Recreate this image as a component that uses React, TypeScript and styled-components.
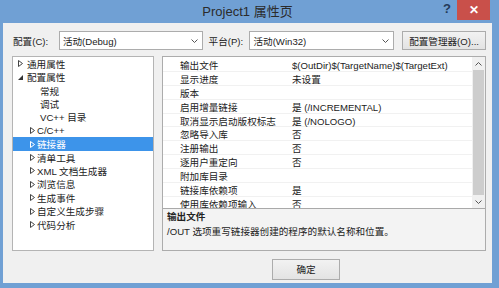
import styled, { createGlobalStyle } from "styled-components";

const GlobalStyle = createGlobalStyle`
  html, body {
    margin: 0;
    padding: 0;
    background: #70a0d4;
  }
  body {
    font-family: "Liberation Sans", "Noto Sans CJK SC", sans-serif;
    font-size: 9.6px;
    color: #222;
  }
`;

const Window = styled.div`
  width: 499px;
  height: 288px;
  box-sizing: border-box;
  padding: 0 7px 5px 3px;
  background: #70a0d4;
  display: flex;
  flex-direction: column;
`;

const TitleBar = styled.div`
  height: 23px;
  display: grid;
  grid-template-columns: 1fr auto 1fr;
  align-items: start;
`;

const Title = styled.div`
  grid-column: 2;
  line-height: 23px;
  font-size: 13px;
  color: #2b2b2b;
`;

const Caption = styled.div`
  grid-column: 3;
  display: flex;
  justify-content: flex-end;
  align-items: flex-start;
  padding-right: 2px;
`;

const HelpButton = styled.div`
  width: 16px;
  height: 20px;
  line-height: 18px;
  text-align: center;
  font-size: 13px;
  font-weight: bold;
  color: #243a58;
  margin-right: 2px;
`;

const CloseButton = styled.div`
  width: 33px;
  height: 20px;
  background: #c9504a;
  color: #fff;
  font-size: 12px;
  font-weight: bold;
  display: flex;
  align-items: center;
  justify-content: center;
`;

const Content = styled.div`
  flex: 1;
  background: #f0f0f0;
  padding: 8px 6px 0 9px;
  display: flex;
  flex-direction: column;
`;

const TopRow = styled.div`
  height: 19px;
  display: flex;
  align-items: center;
`;

const Label = styled.span<{ $width: number; $gap?: number }>`
  width: ${(p) => p.$width}px;
  margin-left: ${(p) => p.$gap ?? 0}px;
  padding-left: 1px;
  box-sizing: border-box;
  white-space: nowrap;
`;

const Combo = styled.div<{ $width: number }>`
  width: ${(p) => p.$width}px;
  height: 19px;
  box-sizing: border-box;
  background: #fff;
  border: 1px solid #acacac;
  display: flex;
  align-items: center;
  justify-content: space-between;
  padding: 0 4px 0 3px;
`;

const Button = styled.div<{ $width: number; $height?: number; $gap?: number }>`
  width: ${(p) => p.$width}px;
  height: ${(p) => p.$height ?? 19}px;
  margin-left: ${(p) => p.$gap ?? 0}px;
  box-sizing: border-box;
  border: 1px solid #acacac;
  background: linear-gradient(#f2f2f2, #e3e3e3);
  display: flex;
  align-items: center;
  justify-content: center;
  white-space: nowrap;
`;

const Panels = styled.div`
  margin-top: 6px;
  height: 195px;
  display: flex;
  gap: 8px;
`;

const Tree = styled.div`
  width: 142px;
  box-sizing: border-box;
  background: #fff;
  border: 1px solid #b4b4b4;
  display: flex;
  flex-direction: column;
`;

const TreeRow = styled.div<{ $level: number; $selected?: boolean }>`
  height: 13.42px;
  display: flex;
  align-items: center;
  padding-left: ${(p) => (p.$level === 1 ? 5 : 17)}px;
  background: ${(p) => (p.$selected ? "#3d94ea" : "transparent")};
  color: ${(p) => (p.$selected ? "#fff" : "#222")};
  white-space: nowrap;
`;

const Arrow = styled.span<{ $width: number }>`
  width: ${(p) => p.$width}px;
  flex: none;
  display: flex;
  align-items: center;
`;

const Grid = styled.div`
  flex: 1;
  box-sizing: border-box;
  border: 1px solid #acacac;
  background: #fff;
  display: flex;
  flex-direction: column;
`;

const GridBody = styled.div`
  height: 151px;
  display: flex;
`;

const Rows = styled.div`
  flex: 1;
  overflow: hidden;
  padding-top: 1px;
`;

const PropRow = styled.div`
  height: 13.9px;
  box-sizing: border-box;
  border-bottom: 1px solid #f1f1f1;
  display: grid;
  grid-template-columns: 112px 1fr;
  align-items: center;
  padding-left: 17px;
  white-space: nowrap;
`;

const Scrollbar = styled.div`
  width: 13px;
  background: #f0f0f0;
  display: flex;
  flex-direction: column;
  align-items: center;
`;

const ScrollArrow = styled.div`
  height: 13px;
  display: flex;
  align-items: center;
  justify-content: center;
`;

const Thumb = styled.div`
  flex: 1;
  width: 11px;
  background: #cdcdcd;
`;

const Description = styled.div`
  flex: 1;
  border-top: 1px solid #a9a9a9;
  background: #f3f3f3;
  padding: 1px 4px 0;
  line-height: 14.5px;
`;

const DescTitle = styled.div`
  font-weight: bold;
`;

const Footer = styled.div`
  flex: 1;
  display: flex;
  justify-content: flex-end;
  align-items: center;
  padding: 4px 146px 0 0;
`;

const Chevron = ({ up }: { up?: boolean }) => (
  <svg width="7" height="4" viewBox="0 0 7 4">
    <path
      d={up ? "M0.5 3.5 L3.5 0.5 L6.5 3.5" : "M0.5 0.5 L3.5 3.5 L6.5 0.5"}
      fill="none"
      stroke="#555"
      strokeWidth="1"
    />
  </svg>
);

const Collapsed = ({ color }: { color: string }) => (
  <svg width="5" height="7" viewBox="0 0 5 7">
    <path d="M0.5 0.5 L4.5 3.5 L0.5 6.5 Z" fill="none" stroke={color} strokeWidth="1" />
  </svg>
);

const Expanded = () => (
  <svg width="5" height="5" viewBox="0 0 5 5">
    <path d="M5 0 L5 5 L0 5 Z" fill="#333" />
  </svg>
);

type Node = { label: string; level: number; kind: "collapsed" | "expanded" | "leaf"; selected?: boolean };

const treeNodes: Node[] = [
  { label: "通用属性", level: 1, kind: "collapsed" },
  { label: "配置属性", level: 1, kind: "expanded" },
  { label: "常规", level: 2, kind: "leaf" },
  { label: "调试", level: 2, kind: "leaf" },
  { label: "VC++ 目录", level: 2, kind: "leaf" },
  { label: "C/C++", level: 2, kind: "collapsed" },
  { label: "链接器", level: 2, kind: "collapsed", selected: true },
  { label: "清单工具", level: 2, kind: "collapsed" },
  { label: "XML 文档生成器", level: 2, kind: "collapsed" },
  { label: "浏览信息", level: 2, kind: "collapsed" },
  { label: "生成事件", level: 2, kind: "collapsed" },
  { label: "自定义生成步骤", level: 2, kind: "collapsed" },
  { label: "代码分析", level: 2, kind: "collapsed" },
];

const props: [string, string][] = [
  ["输出文件", "$(OutDir)$(TargetName)$(TargetExt)"],
  ["显示进度", "未设置"],
  ["版本", ""],
  ["启用增量链接", "是 (/INCREMENTAL)"],
  ["取消显示启动版权标志", "是 (/NOLOGO)"],
  ["忽略导入库", "否"],
  ["注册输出", "否"],
  ["逐用户重定向", "否"],
  ["附加库目录", ""],
  ["链接库依赖项", "是"],
  ["使用库依赖项输入", "否"],
];

export default function App() {
  return (
    <>
      <GlobalStyle />
      <Window>
        <TitleBar>
          <Title>Project1 属性页</Title>
          <Caption>
            <HelpButton>?</HelpButton>
            <CloseButton>✕</CloseButton>
          </Caption>
        </TitleBar>
        <Content>
          <TopRow>
            <Label $width={47}>配置(C):</Label>
            <Combo $width={144}>
              <span>活动(Debug)</span>
              <Chevron />
            </Combo>
            <Label $width={42} $gap={5}>平台(P):</Label>
            <Combo $width={145}>
              <span>活动(Win32)</span>
              <Chevron />
            </Combo>
            <Button $width={84} $gap={8}>配置管理器(O)...</Button>
          </TopRow>
          <Panels>
            <Tree>
              {treeNodes.map((n) => (
                <TreeRow key={n.label} $level={n.level} $selected={n.selected}>
                  <Arrow $width={n.kind === "leaf" ? 10 : n.level === 1 ? 9 : 7}>
                    {n.kind === "collapsed" && <Collapsed color={n.selected ? "#fff" : "#444"} />}
                    {n.kind === "expanded" && <Expanded />}
                  </Arrow>
                  <span>{n.label}</span>
                </TreeRow>
              ))}
            </Tree>
            <Grid>
              <GridBody>
                <Rows>
                  {props.map(([name, value]) => (
                    <PropRow key={name}>
                      <span>{name}</span>
                      <span>{value}</span>
                    </PropRow>
                  ))}
                </Rows>
                <Scrollbar>
                  <ScrollArrow>
                    <Chevron up />
                  </ScrollArrow>
                  <Thumb />
                  <ScrollArrow>
                    <Chevron />
                  </ScrollArrow>
                </Scrollbar>
              </GridBody>
              <Description>
                <DescTitle>输出文件</DescTitle>
                <div>/OUT 选项重写链接器创建的程序的默认名称和位置。</div>
              </Description>
            </Grid>
          </Panels>
          <Footer>
            <Button $width={68} $height={21}>确定</Button>
          </Footer>
        </Content>
      </Window>
    </>
  );
}
